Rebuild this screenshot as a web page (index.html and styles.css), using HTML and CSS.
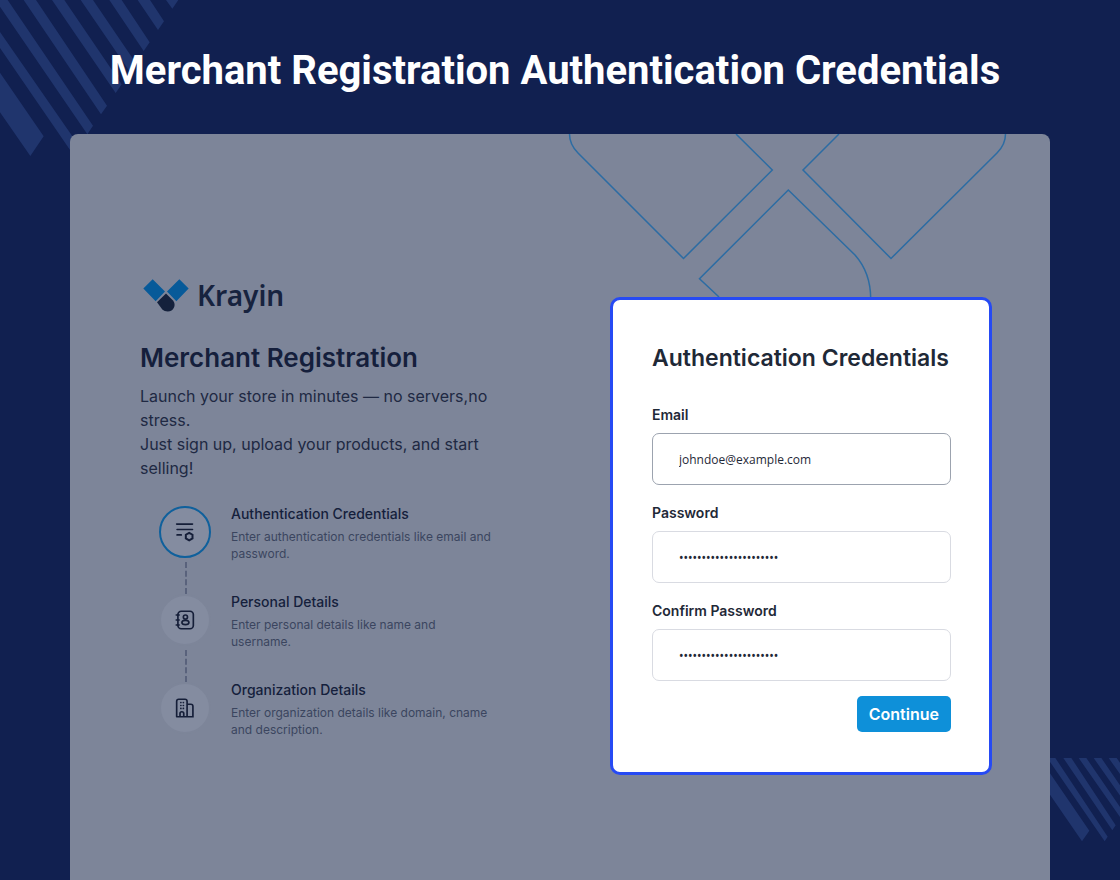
FILE: index.html
```html
<!DOCTYPE html>
<html lang="en">
<head>
<meta charset="utf-8">
<title>Merchant Registration Authentication Credentials</title>
<link rel="stylesheet" href="styles.css">
</head>
<body>
<svg class="stripes stripes-top" viewBox="0 0 600 510" aria-hidden="true">
<path d="M0 218L131 409L91 468L0 337ZM0 96L239 440L221 466L0 144ZM-14 0H23L279 377L262 403ZM71 0H108L321 317L303 343ZM156 0H193L365 253L347 279ZM242 0H279L408 190L390 216ZM328 0H365L449 127L431 153ZM413 0H450L492 64L474 90ZM498 0H535L517 26Z"/>
</svg>
<svg class="stripes stripes-bottom" viewBox="0 0 210 252" aria-hidden="true">
<path d="M0 46L118 218L96 250L0 110ZM-8 0H16L173 236L164 250ZM40 0H64L197 202L187 217ZM86 0H109L256 214L246 228ZM131 0H154L301 214L291 228ZM176 0H200L347 214L337 228Z"/>
</svg>
<h1 class="page-title">Merchant Registration Authentication Credentials</h1>
<main class="panel">
<svg class="outline" viewBox="0 0 500 166" aria-hidden="true">
<path d="M19.5 0C19.5 8 22 13 28 19L133.5 124.5L222.3 36L186 0M289 0L253 36L341 124.5L447 19C453 13 455.5 8 455.5 0M169 163L149.5 144.7L238.3 56L305 121Q321 139 320.7 166"/>
</svg>
<section class="intro">
<div class="brand">
<svg class="brand-mark" viewBox="0 0 138 98" aria-hidden="true">
<path class="blue" d="M1 28L29 0L66 37L38 66ZM109 0L137 28L100 66L72 37Z"/>
<path class="navy" d="M69 43L90 64C101 77 92 97 74 97C68 97 62 95 58 91L42 69Z"/>
</svg>
<span>Krayin</span>
</div>
<h2>Merchant Registration</h2>
<p class="lead">Launch your store in minutes — no servers,no stress.<br>Just sign up, upload your products, and start selling!</p>
<ol class="steps">
<li class="step active">
<span class="step-icon"><svg viewBox="0 0 24 24" aria-hidden="true"><path d="M2 2.500H21M2.500 9H21M2.500 15.500H7.500"/><path class="gear" d="M17 13L21 15.300V19.700L17 22L13 19.700V15.300Z"/></svg></span>
<div><h3>Authentication Credentials</h3><p>Enter authentication credentials like email and password.</p></div>
</li>
<li class="step">
<span class="step-icon"><svg viewBox="0 0 24 24" aria-hidden="true"><rect x="3.500" y="1.500" width="18.500" height="21" rx="4"/><path d="M1.500 6H5M1.500 12H5M1.500 18H5"/><circle cx="12.500" cy="8.500" r="2.500"/><ellipse cx="12.500" cy="15" rx="4.200" ry="2.500"/></svg></span>
<div><h3>Personal Details</h3><p>Enter personal details like name and username.</p></div>
</li>
<li class="step">
<span class="step-icon"><svg viewBox="0 0 24 24" aria-hidden="true"><path d="M2 22.500V4Q2 1.500 4.500 1.500H12Q14.500 1.500 14.500 4V22.500M14.500 7.500H19Q21.500 7.500 21.500 10V22.500H2M6 22V18.500Q6 16.500 8.200 16.500Q10.500 16.500 10.500 18.500V22M7 5.500H7.100M10 5.500H10.100M7 9H7.100M10 9H10.100M7 12.500H7.100M10 12.500H10.100"/></svg></span>
<div><h3>Organization Details</h3><p>Enter organization details like domain, cname and description.</p></div>
</li>
</ol>
</section>
<form class="card">
<h2>Authentication Credentials</h2>
<label for="email">Email</label>
<input class="filled" id="email" type="email" value="johndoe@example.com">
<label for="password">Password</label>
<input id="password" type="password" value="merchant-password-2024">
<label for="confirm">Confirm Password</label>
<input id="confirm" type="password" value="merchant-password-2024">
<button type="button">Continue</button>
</form>
</main>
</body>
</html>
```
FILE: styles.css
```css
* {
  box-sizing: border-box;
}

body {
  margin: 0;
  min-height: 100vh;
  display: flex;
  flex-direction: column;
  position: relative;
  overflow-x: hidden;
  background: #112050;
  font-family: Inter, "Liberation Sans", sans-serif;
}

h1, h2, h3, p, ol {
  margin: 0;
  padding: 0;
}

.stripes {
  position: absolute;
  fill: #20356d;
}

.stripes-top {
  top: 0;
  left: 0;
  width: 200px;
  height: 170px;
}

.stripes-bottom {
  right: 0;
  bottom: 38px;
  width: 70px;
  height: 84px;
}

.page-title {
  position: relative;
  padding: 47px 10px 39px 0;
  color: #fff;
  font: 700 40px/48px Roboto, sans-serif;
  text-align: center;
}

.panel {
  position: relative;
  flex: 1;
  display: flex;
  justify-content: space-between;
  align-items: flex-start;
  margin: 0 70px;
  padding: 144px 58px 60px 70px;
  border-radius: 8px 8px 0 0;
  background: #7d8599;
}

.outline {
  position: absolute;
  top: 0;
  right: 0;
  width: 500px;
  height: 166px;
  fill: none;
  stroke: #2c6ca3;
  stroke-width: 1.500;
}

.intro {
  width: 364px;
  color: #202943;
}

.brand {
  display: flex;
  align-items: center;
  gap: 8px;
  height: 34px;
  padding-left: 3px;
  color: #17233f;
  font: 600 28px/32px "Noto Sans", sans-serif;
}

.brand-mark {
  width: 46px;
  height: 33px;
}

.blue {
  fill: #075a99;
}

.navy {
  fill: #14213c;
}

.intro h2 {
  margin-top: 28px;
  color: #151f3c;
  font-size: 26px;
  font-weight: 600;
  line-height: 36px;
}

.lead {
  margin-top: 8px;
  font-size: 16px;
  line-height: 24px;
}

.steps {
  display: flex;
  flex-direction: column;
  gap: 32px;
  margin-top: 26px;
  list-style: none;
}

.step {
  position: relative;
  display: flex;
  gap: 20px;
  padding: 0 10px 0 19px;
}

.step:not(:last-child)::after {
  content: "";
  position: absolute;
  left: 45px;
  top: 56px;
  height: 32px;
  border-left: 2px dashed #59627c;
}

.step-icon {
  flex: none;
  display: grid;
  place-items: center;
  width: 52px;
  height: 52px;
  border: 2px solid #7d8599;
  border-radius: 50%;
  background: #848ca0;
}

.active .step-icon {
  border-color: #0f609c;
}

.step-icon svg {
  width: 20px;
  height: 20px;
  fill: none;
  stroke: #151e38;
  stroke-width: 2;
  stroke-linecap: round;
}

.step-icon .gear {
  stroke-width: 2.400;
}

.step h3 {
  color: #151f3c;
  font-size: 14px;
  font-weight: 500;
  line-height: 16px;
}

.step p {
  margin-top: 6px;
  color: #3b455f;
  font-size: 12px;
  line-height: 17px;
}

.card {
  position: relative;
  display: flex;
  flex-direction: column;
  width: 382px;
  margin-top: 19px;
  padding: 39px 38px 40px 39px;
  border: 3px solid #264af4;
  border-radius: 10px;
  background: #fff;
  color: #1f2937;
}

.card h2 {
  margin-bottom: 30px;
  font-size: 23px;
  font-weight: 600;
  line-height: 38px;
  white-space: nowrap;
}

.card label {
  margin-bottom: 10px;
  font-size: 14px;
  font-weight: 600;
  line-height: 16px;
}

.card input {
  width: 100%;
  height: 52px;
  margin-bottom: 20px;
  padding: 0 26px;
  border: 1px solid #d9dbe2;
  border-radius: 7px;
  background: #fff;
  color: #1f2937;
  font: 12px "Noto Sans", sans-serif;
}

.card input.filled {
  border-color: #9ca3af;
  font-family: "Open Sans", sans-serif;
}

.card button {
  align-self: flex-end;
  height: 36px;
  margin-top: -5px;
  padding: 0 12px;
  border: 0;
  border-radius: 5px;
  background: #0e90d9;
  color: #fff;
  font: 600 16px Inter, sans-serif;
}
```
